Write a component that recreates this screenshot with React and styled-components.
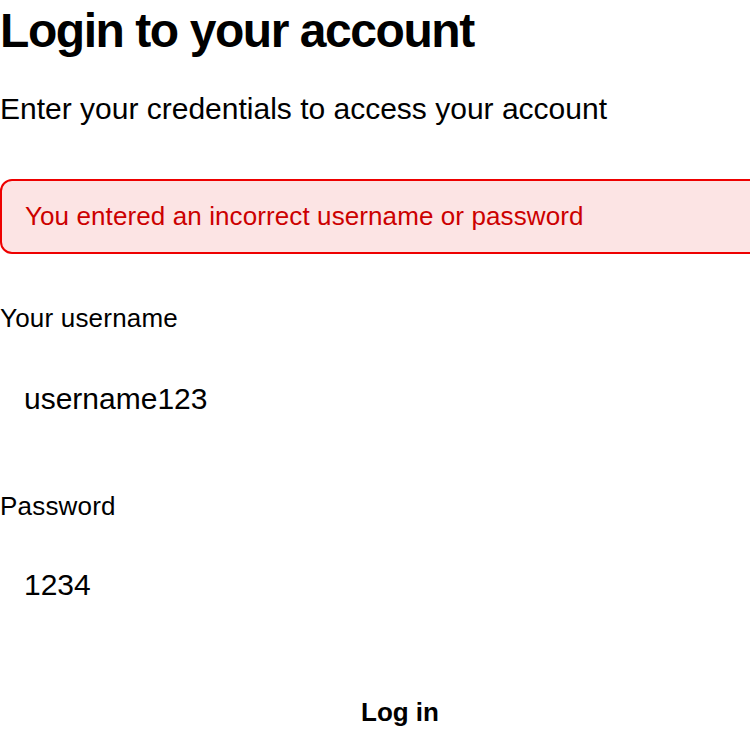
import styled, { createGlobalStyle } from "styled-components";

const GlobalStyle = createGlobalStyle`
  html, body {
    margin: 0;
    padding: 0;
    overflow: hidden;
    background: #fff;
    font-family: "Liberation Sans", Arial, sans-serif;
    color: #000;
  }
`;

export default function App() {
  return (
    <>
      <GlobalStyle />
      <LoginBox>
        <Title>Login to your account</Title>
        <Subtitle>Enter your credentials to access your account</Subtitle>

        <ErrorBox>You entered an incorrect username or password</ErrorBox>

        <Field>
          <Label htmlFor="username">Your username</Label>
          <Input id="username" type="text" defaultValue="username123" />
        </Field>

        <Field>
          <Label htmlFor="password">Password</Label>
          <Input id="password" type="text" defaultValue="1234" $gap={39} />
        </Field>

        <SubmitBtn type="button">Log in</SubmitBtn>
      </LoginBox>
    </>
  );
}

const LoginBox = styled.section`
  display: flex;
  flex-direction: column;
  width: 800px;
`;

const Title = styled.h1`
  margin: 0;
  padding-top: 3px;
  font-size: 48px;
  font-weight: 700;
  line-height: 55px;
  letter-spacing: -0.03em;
`;

const Subtitle = styled.p`
  margin: 34px 0 0;
  font-size: 30px;
  line-height: 34px;
`;

const ErrorBox = styled.div`
  margin-top: 53px;
  height: 71px;
  display: flex;
  align-items: center;
  padding: 0 23px;
  font-size: 26px;
  letter-spacing: 0.1px;
  color: #cc0000;
  background: #fce4e4;
  border: 2px solid #ee0000;
  border-radius: 12px;
`;

const Field = styled.div`
  display: flex;
  flex-direction: column;
  margin-top: 49px;

  & + & {
    margin-top: 67px;
  }
`;

const Label = styled.label`
  font-size: 26px;
  line-height: 30px;
  letter-spacing: 0.2px;
`;

const Input = styled.input`
  margin-top: ${(p) => p.$gap ?? 41}px;
  padding: 8px 24px;
  font-family: "Liberation Sans", Arial, sans-serif;
  font-size: 30px;
  color: #000;
  background: transparent;
  border: 0;
  outline: none;
`;

const SubmitBtn = styled.button`
  margin-top: 77px;
  align-self: stretch;
  padding: 10px 0;
  font-family: "Liberation Sans", Arial, sans-serif;
  font-size: 26px;
  font-weight: 700;
  color: #000;
  background: transparent;
  border: 0;
`;
